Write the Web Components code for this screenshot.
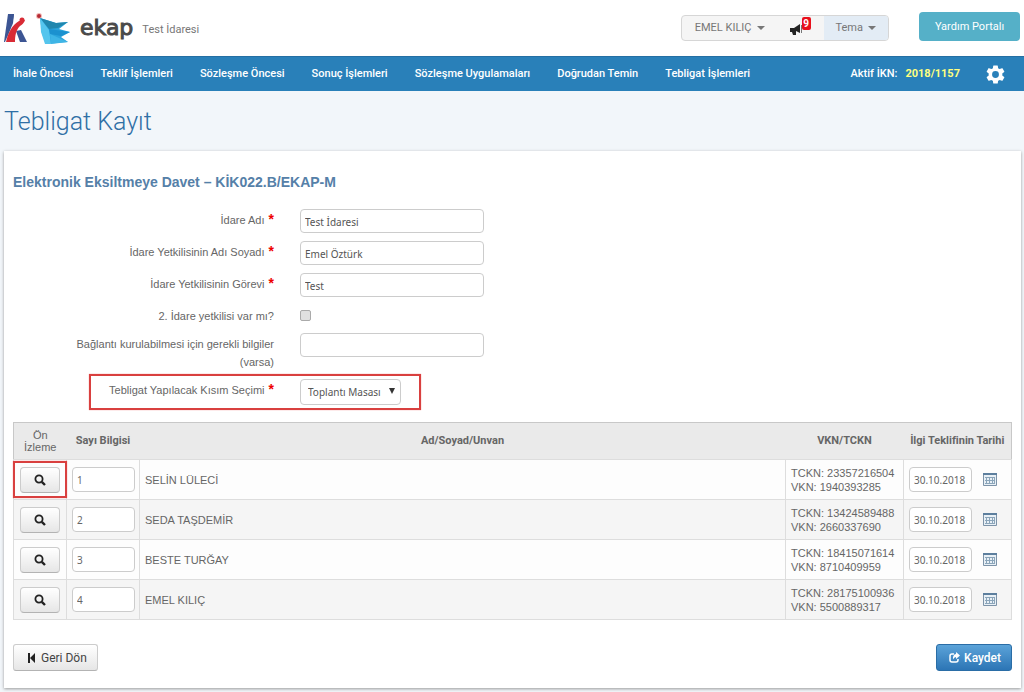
<!DOCTYPE html>
<html lang="tr">
<head>
<meta charset="utf-8">
<title>EKAP – Tebligat Kayıt</title>
<style>
  body { margin: 0; background: #f2f6fa; color: #666; font: 11px/18px Roboto, "Liberation Sans", sans-serif; }
</style>
</head>
<body>
<ekap-page>
  <ekap-header slot="header" unit="Test İdaresi" user="EMEL KILIÇ" count="9"></ekap-header>
  <ekap-nav slot="nav" ikn="2018/1157">
    <a href="#">İhale Öncesi</a>
    <a href="#">Teklif İşlemleri</a>
    <a href="#">Sözleşme Öncesi</a>
    <a href="#">Sonuç İşlemleri</a>
    <a href="#">Sözleşme Uygulamaları</a>
    <a href="#">Doğrudan Temin</a>
    <a href="#">Tebligat İşlemleri</a>
  </ekap-nav>
  <span slot="title">Tebligat Kayıt</span>
  <ekap-card>
    <span slot="heading">Elektronik Eksiltmeye Davet – KİK022.B/EKAP-M</span>
    <ekap-form>
      <ekap-field label="İdare Adı" value="Test İdaresi" required></ekap-field>
      <ekap-field label="İdare Yetkilisinin Adı Soyadı" value="Emel Öztürk" required></ekap-field>
      <ekap-field label="İdare Yetkilisinin Görevi" value="Test" required></ekap-field>
      <ekap-field label="2. İdare yetkilisi var mı?" type="checkbox"></ekap-field>
      <ekap-field label="Bağlantı kurulabilmesi için gerekli bilgiler (varsa)"></ekap-field>
      <ekap-field label="Tebligat Yapılacak Kısım Seçimi" type="select" value="Toplantı Masası" required marked></ekap-field>
    </ekap-form>
    <ekap-table></ekap-table>
    <ekap-button slot="actions" icon="back">Geri Dön</ekap-button>
    <ekap-button slot="actions" icon="share" primary>Kaydet</ekap-button>
  </ekap-card>
</ekap-page>

<script>
const define = (name, render) => customElements.define(name, class extends HTMLElement {
  constructor() {
    super();
    this.attachShadow({ mode: 'open' });
  }
  connectedCallback() {
    if (!this.shadowRoot.firstChild) this.shadowRoot.innerHTML = render(this);
  }
});

define('ekap-page', () => `
  <style>
    :host { display: block; }
    h1 { margin: 0; padding: 14px 4px 12px; font: 300 25px/34px Roboto, sans-serif; color: #2f6fa5; }
    main { padding: 0 3px 4px 4px; }
  </style>
  <slot name="header"></slot>
  <slot name="nav"></slot>
  <h1><slot name="title"></slot></h1>
  <main><slot></slot></main>`);

define('ekap-header', el => `
  <style>
    :host { display: flex; align-items: center; height: 56px; padding: 0 4px; background: #fff; box-sizing: border-box; color: #777; }
    .logo { display: block; flex: none; }
    .brand { margin-left: 9px; font: 22px/28px "DejaVu Sans", sans-serif; color: #4a4a4a; -webkit-text-stroke: 1px #4a4a4a; }
    .unit { margin: 4px auto 0 9px; }
    .group { display: flex; height: 26px; box-sizing: border-box; border: 1px solid #d6d6d6; border-radius: 4px; background: #f5f5f5; overflow: hidden; }
    button { font: inherit; color: inherit; border: 0; background: none; padding: 0; cursor: pointer; }
    .group button { display: flex; align-items: center; gap: 5px; padding: 0 13px; }
    .group button::after { content: ""; border: 4px solid transparent; border-top-color: #777; border-bottom: 0; }
    .group .bell { position: relative; width: 46px; padding: 0 12px; }
    .group .bell::after { content: none; }
    .bell svg { display: block; margin-top: 2px; }
    .badge { position: absolute; left: 24px; top: 1px; width: 9px; height: 13px; border-radius: 2px; background: #e8101c; color: #fff; font: 700 10px/13px Roboto, sans-serif; text-align: center; }
    .group .theme { padding: 0 12px; background: #e3ecf5; }
    .help { margin: 0 0 3px 30px; width: 101px; height: 29px; border-radius: 4px; background: #55b0c8; color: #fff; }
  </style>
  <svg class="logo" width="67" height="34" viewBox="0 0 67 34" role="img" aria-label="EKAP">
    <path fill="#3c5593" d="M4 3h6L9 12 5 22 1 31H0z"/>
    <path fill="#3c5593" d="M9 3h1L8 15z"/>
    <path fill="#3c5593" d="M12 20l5-1 6 12h-7z"/>
    <path fill="#d92b35" d="M2 31C4 22 8 14 15 10l6-1c-1 3-3 5-5 6-4 4-5 10-5 16H8l1-4-1 4z"/>
    <circle cx="18" cy="9" r="2.500" fill="#d92b35"/>
    <circle cx="35" cy="5" r="3" fill="#f3b8b4"/>
    <circle cx="35" cy="5" r="2" fill="#b52a35"/>
    <path fill="#2ba4dc" d="M36 7l16 5 12-1-9 7 11 3-9 5 7 5-22 2-4-11z"/>
    <path fill="#2187ae" d="M36 7l16 5 12-1-10 6-9 1z"/>
    <path fill="#55c5ed" d="M36 7l9 12 2 14h-6l-4-12z"/>
    <path fill="#1b91cf" d="M45 18l21 3-9 4-11-2z"/>
    <path fill="#3eb5e6" d="M46 23l18 8-17 2z"/>
  </svg>
  <span class="brand">ekap</span>
  <span class="unit">${el.getAttribute('unit')}</span>
  <div class="group">
    <button type="button">${el.getAttribute('user')}</button>
    <button type="button" class="bell" aria-label="Duyurular">
      <svg width="12" height="11" viewBox="0 0 12 11"><path fill="#222" d="M1 4h3l6-4v9L6 7v4H3L2 8H1z"/><path fill="#222" d="M0 4h1v4H0z"/><path fill="#777" d="M11 1h1v8h-1z"/></svg>
      <span class="badge">${el.getAttribute('count')}</span>
    </button>
    <button type="button" class="theme">Tema</button>
  </div>
  <button type="button" class="help">Yardım Portalı</button>`);

define('ekap-nav', el => `
  <style>
    :host { display: flex; align-items: center; height: 35px; padding: 0 19px 0 13px; box-sizing: border-box; background: #2980b9; border-top: 1px solid #246fa3; color: #fff; font-weight: 500; }
    nav { display: flex; gap: 27px; margin-right: auto; }
    ::slotted(a) { color: #fff; text-decoration: none; white-space: nowrap; }
    b { margin-left: 8px; color: #ffff80; }
    button { display: block; margin-left: 26px; padding: 0; border: 0; background: none; cursor: pointer; }
    svg { display: block; }
  </style>
  <nav><slot></slot></nav>
  <span>Aktif İKN:</span><b>${el.getAttribute('ikn')}</b>
  <button type="button" aria-label="Ayarlar">
    <svg width="19" height="19" viewBox="2 2 20 20"><path fill="#fff" d="M19.14 12.94c.04-.3.06-.61.06-.94 0-.32-.02-.64-.07-.94l2.03-1.58a.49.49 0 0 0 .12-.61l-1.92-3.32a.49.49 0 0 0-.59-.22l-2.39.96c-.5-.38-1.03-.7-1.62-.94l-.36-2.54a.48.48 0 0 0-.48-.41h-3.84a.48.48 0 0 0-.47.41l-.36 2.54c-.59.24-1.13.57-1.62.94l-2.39-.96a.48.48 0 0 0-.59.22L2.74 8.87a.48.48 0 0 0 .12.61l2.03 1.58c-.05.3-.09.63-.09.94s.02.64.07.94l-2.03 1.58a.49.49 0 0 0-.12.61l1.92 3.32c.12.22.37.29.59.22l2.39-.96c.5.38 1.03.7 1.62.94l.36 2.54c.05.24.24.41.48.41h3.84c.24 0 .44-.17.47-.41l.36-2.54c.59-.24 1.13-.56 1.62-.94l2.39.96c.22.08.47 0 .59-.22l1.92-3.32a.48.48 0 0 0-.12-.61zM12 15.6a3.6 3.6 0 1 1 0-7.2 3.6 3.6 0 0 1 0 7.2z"/></svg>
  </button>`);

define('ekap-card', () => `
  <style>
    :host { display: block; padding: 22px 9px 17px; background: #fff; box-shadow: 0 1px 3px #999; }
    h2 { margin: 0 0 18px; font: 700 14px/18px "Liberation Sans", sans-serif; color: #5580a8; }
    footer { display: flex; justify-content: space-between; margin-top: 24px; }
  </style>
  <h2><slot name="heading"></slot></h2>
  <slot></slot>
  <footer><slot name="actions"></slot></footer>`);

define('ekap-form', () => `
  <style>:host { display: flex; flex-direction: column; gap: 8px; margin-bottom: 17px; }</style>
  <slot></slot>`);

define('ekap-field', el => {
  const type = el.getAttribute('type') || 'text';
  const value = el.getAttribute('value') || '';
  const control = type === 'select'
    ? `<select id="control"><option>${value}</option></select>`
    : `<input id="control" type="${type}" ${type === 'text' ? `value="${value}"` : ''}>`;
  return `
  <style>
    :host { display: grid; grid-template-columns: 261px 1fr; column-gap: 26px; align-items: start; position: relative; }
    label { padding: 2px 0 0 50px; text-align: right; font-family: "Liberation Sans", sans-serif; }
    i { color: #e00; font: 700 14px/14px "Liberation Sans", sans-serif; margin-left: 4px; }
    #control { display: block; box-sizing: border-box; margin: 0; border: 1px solid #ccc; border-radius: 4px; background: #fff; color: #555; font: 10px/16px "Noto Sans", "Open Sans", sans-serif; }
    input[type=text] { width: 184px; height: 24px; padding: 1px 4px 0; }
    #control[type=checkbox] { appearance: none; width: 11px; height: 11px; margin-top: 5px; border-color: #aaa; border-radius: 2px; background: #e0e0e0; }
    .select { position: relative; justify-self: start; }
    select { appearance: none; width: 101px; height: 26px; padding: 0 7px; }
    .select::after { content: ""; position: absolute; right: 6px; top: 9px; border: 3px solid transparent; border-top: 6px solid #333; border-bottom: 0; pointer-events: none; }
    :host([marked])::before { content: ""; position: absolute; left: 76px; top: -5px; width: 332px; height: 36px; box-sizing: border-box; border: 2px solid #d9403f; box-shadow: 0 0 1px #f08080; pointer-events: none; }
  </style>
  <label for="control">${el.getAttribute('label')}${el.hasAttribute('required') ? '<i>*</i>' : ''}</label>
  <span class="${type}">${control}</span>`;
});

const rows = [
  ['1', 'SELİN LÜLECİ', '23357216504', '1940393285'],
  ['2', 'SEDA TAŞDEMİR', '13424589488', '2660337690'],
  ['3', 'BESTE TURĞAY', '18415071614', '8710409959'],
  ['4', 'EMEL KILIÇ', '28175100936', '5500889317']
];
define('ekap-table', () => `
  <style>
    :host { display: block; font-family: "Liberation Sans", sans-serif; }
    table { width: 100%; border-collapse: collapse; table-layout: fixed; border: 1px solid #c8c8c8; }
    th, td { box-sizing: border-box; padding: 0 5px; text-align: left; white-space: nowrap; }
    th { height: 37px; padding: 0; text-align: center; font: 700 11px/12px Roboto, sans-serif; background: #eaeaea; }
    th:first-child { font: 11px/12px "Liberation Sans", sans-serif; }
    td { height: 40px; border: 1px solid #ddd; line-height: 14px; }
    tbody tr { background: #fdfdfd; }
    tbody tr:nth-child(even) { background: #f5f5f5; }
    .preview { position: relative; text-align: center; }
    .preview button { display: inline-flex; align-items: center; justify-content: center; width: 40px; height: 26px; padding: 0; vertical-align: middle; border: 1px solid #ccc; border-bottom-color: #b3b3b3; border-radius: 4px; background: linear-gradient(#fff, #e6e6e6); cursor: pointer; }
    tbody tr:first-child .preview::after { content: ""; position: absolute; inset: 1px -1px 1px -1px; border: 2px solid #d9403f; box-shadow: 0 0 1px #f08080; pointer-events: none; }
    input { box-sizing: border-box; width: 63px; height: 25px; padding: 1px 4px 0; margin: 0; vertical-align: middle; border: 1px solid #ccc; border-radius: 4px; background: #fff; color: #666; font: 10px/16px "Noto Sans", "Open Sans", sans-serif; }
    .date { display: flex; align-items: center; gap: 11px; }
    .date button { padding: 0; border: 0; background: none; cursor: pointer; }
    svg { display: block; }
  </style>
  <table>
    <colgroup><col style="width:53px"><col style="width:73px"><col><col style="width:118px"><col style="width:108px"></colgroup>
    <thead><tr><th>Ön<br>İzleme</th><th>Sayı Bilgisi</th><th>Ad/Soyad/Unvan</th><th>VKN/TCKN</th><th>İlgi Teklifinin Tarihi</th></tr></thead>
    <tbody>${rows.map(([no, name, tckn, vkn]) => `
      <tr>
        <td class="preview"><button type="button" aria-label="Ön izleme: ${name}"><svg width="12" height="12" viewBox="0 0 12 12" fill="none" stroke="#222"><circle cx="5" cy="5" r="3.6" stroke-width="1.8"/><path d="M7.8 7.8L11 11" stroke-width="2.4"/></svg></button></td>
        <td><input type="text" value="${no}" aria-label="Sayı Bilgisi"></td>
        <td>${name}</td>
        <td>TCKN: ${tckn}<br>VKN: ${vkn}</td>
        <td><div class="date"><input type="text" value="30.10.2018" aria-label="İlgi Teklifinin Tarihi"><button type="button" aria-label="Takvim"><svg width="14" height="13" viewBox="0 0 14 13"><path fill="#e8f0f6" stroke="#7d93a8" d="M.5.5h13v12H.5z"/><path fill="#5d7f9e" d="M0 0h14v2H0z"/><path fill="none" stroke="#8ba5ba" d="M2 4.500h10M2 7.500h10M2 10.500h10M3.500 4v7M6.500 4v7M9.500 4v7M11.500 4v7"/></svg></button></div></td>
      </tr>`).join('')}
    </tbody>
  </table>`);

const icons = {
  back: '<svg width="8" height="10" viewBox="0 0 8 10"><path fill="#222" d="M0 0h2v10H0zM7 0v10L2 5z"/></svg>',
  share: '<svg width="11" height="11" viewBox="0 0 11 11"><path fill="none" stroke="#fff" stroke-width="1.500" d="M5 2H3Q1 2 1 4v4q0 2 2 2h4q2 0 2-2V7"/><path fill="#fff" d="M7 0l4 3.500L7 7V5Q5 5 4 7.500 3.500 2.500 7 2z"/></svg>'
};
define('ekap-button', el => `
  <style>
    :host { display: block; }
    button { display: flex; align-items: center; gap: 5px; height: 27px; padding: 0 10px 0 14px; border: 1px solid #ccc; border-bottom-color: #b3b3b3; border-radius: 3px; background: linear-gradient(#fff, #e6e6e6); color: #444; font: 12px/18px Roboto, sans-serif; cursor: pointer; }
    :host([primary]) button { gap: 4px; padding: 0 10px 0 12px; border-color: #2a6da6; background: linear-gradient(#5ba3d9, #2c75b5); color: #fff; font-weight: 500; }
  </style>
  <button type="button">${icons[el.getAttribute('icon')]}<slot></slot></button>`);
</script>
</body>
</html>
